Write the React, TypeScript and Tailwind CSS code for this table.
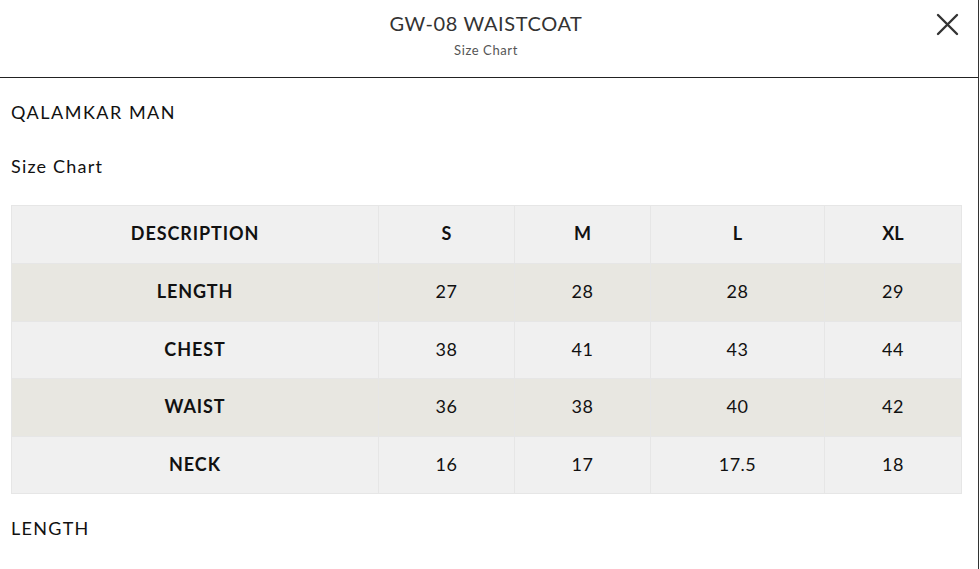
import React from "react";

const rows = [
  ["LENGTH", "27", "28", "28", "29"],
  ["CHEST", "38", "41", "43", "44"],
  ["WAIST", "36", "38", "40", "42"],
  ["NECK", "16", "17", "17.5", "18"],
];

export default function App() {
  return (
    <div
      className="w-[980px] h-[569px] bg-white overflow-hidden"
      style={{ fontFamily: "Lato, 'Noto Sans', sans-serif" }}
    >
      <div className="w-[979px] h-[569px] border-r border-[#333] flex flex-col">
        <div className="relative h-[78px] border-b border-[#222] flex flex-col items-center pt-[10px]">
          <div className="text-[20px] leading-[26px] tracking-[0.6px] text-[#333] mr-[6px]">GW-08 WAISTCOAT</div>
          <div className="text-[13px] leading-[16px] mt-[6px] tracking-[0.6px] text-[#555] mr-[6px]">Size Chart</div>
          <button className="absolute right-[19px] top-[13px] text-[#333]">
            <svg width="24" height="24" viewBox="0 0 24 24" fill="none" stroke="currentColor" strokeWidth="2.4" strokeLinecap="round">
              <path d="M3 2 L22 21 M22 2 L3 21" />
            </svg>
          </button>
        </div>
        <div className="px-[11px] text-[#111]">
          <div className="mt-[22px] text-[18px] leading-[24px] tracking-[1.5px]">QALAMKAR MAN</div>
          <div className="mt-[30px] text-[18px] leading-[24px] tracking-[1.2px]">Size Chart</div>
          <table className="mt-[27px] w-[951px] border-collapse border border-[#e6e6e6] text-[#111]">
            <thead>
              <tr className="bg-[#f0f0f0] h-[58px]">
                <th className="w-[367px] border border-[#e6e6e6] text-[18px] font-bold tracking-[0.9px] pb-[2px]">DESCRIPTION</th>
                <th className="w-[136px] border border-[#e6e6e6] text-[18px] font-bold pb-[2px]">S</th>
                <th className="w-[136px] border border-[#e6e6e6] text-[18px] font-bold pb-[2px]">M</th>
                <th className="w-[174px] border border-[#e6e6e6] text-[18px] font-bold pb-[2px]">L</th>
                <th className="border border-[#e6e6e6] text-[18px] font-bold pb-[2px]">XL</th>
              </tr>
            </thead>
            <tbody>
              {rows.map((r, i) => (
                <tr key={r[0]} className={i % 2 === 0 ? "bg-[#e8e7e1] h-[58px]" : "bg-[#f0f0f0] h-[57px]"}>
                  <td className="border border-[#e6e6e6] text-center text-[18px] font-bold tracking-[0.9px] pb-[2px]">{r[0]}</td>
                  {r.slice(1).map((v, j) => (
                    <td key={j} className="border border-[#e6e6e6] text-center text-[18px] tracking-[0.5px] pb-[2px]">{v}</td>
                  ))}
                </tr>
              ))}
            </tbody>
          </table>
          <div className="mt-[22px] text-[18px] leading-[24px] tracking-[1.3px]">LENGTH</div>
        </div>
      </div>
    </div>
  );
}
